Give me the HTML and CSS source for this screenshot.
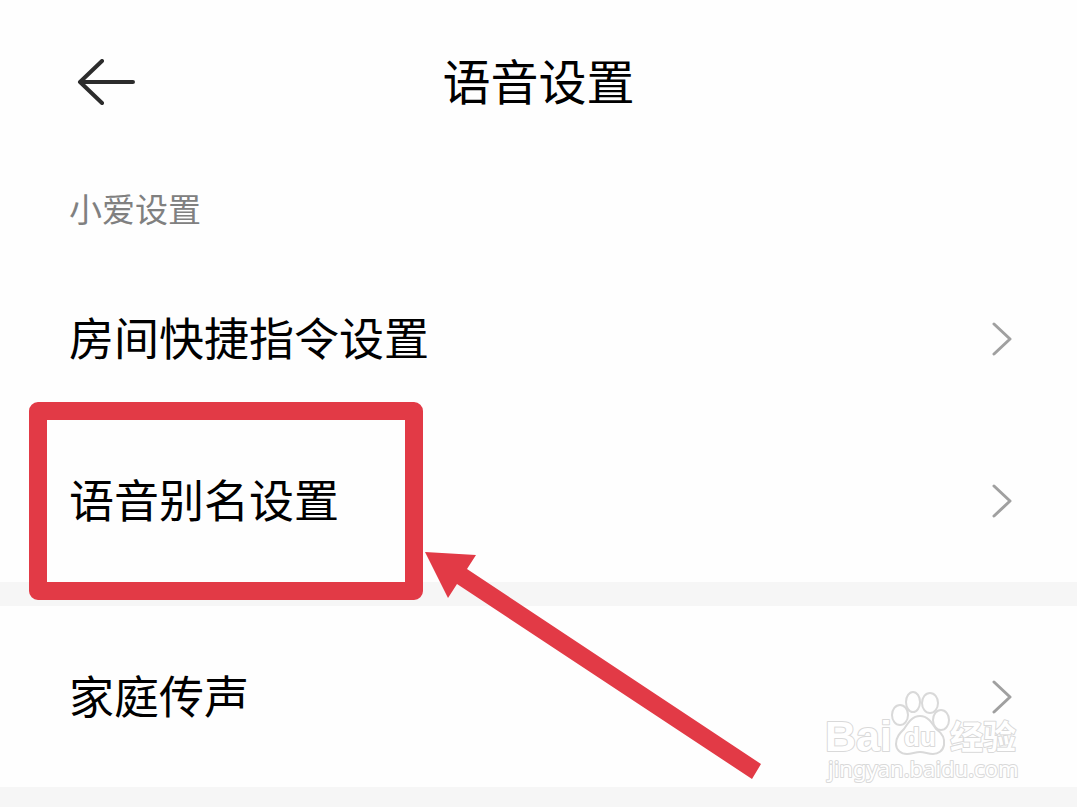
FILE: index.html
```html
<!DOCTYPE html>
<html lang="zh-CN">
<head>
    <meta charset="UTF-8">
    <meta name="viewport" content="width=device-width, initial-scale=1">
    <title>语音设置</title>
    <link rel="stylesheet" href="styles.css">
</head>
<body>
    <header class="header">
        <button class="back" type="button" aria-label="返回">
            <svg width="58" height="46" viewBox="0 0 58 46">
                <path d="M25 2L3 23L25 44M3 23H56"/>
            </svg>
        </button>
        <h1>语音设置</h1>
    </header>

    <main>
        <section class="group">
            <h2>小爱设置</h2>
            <a class="row" href="#room">
                <span>房间快捷指令设置</span>
                <svg class="chevron" width="20" height="34" viewBox="0 0 20 34"><path d="M2 2L18 17L2 32"/></svg>
            </a>
            <div class="marked">
                <a class="row" href="#alias">
                    <span>语音别名设置</span>
                    <svg class="chevron" width="20" height="34" viewBox="0 0 20 34"><path d="M2 2L18 17L2 32"/></svg>
                </a>
                <div class="frame"></div>
                <svg class="arrow" width="338" height="230" viewBox="0 0 338 230">
                    <path d="M1 1L52 4L43 18L337 213L328 228L33 33L24 47Z"/>
                </svg>
            </div>
        </section>

        <section class="group">
            <a class="row tall" href="#broadcast">
                <span>家庭传声</span>
                <svg class="chevron" width="20" height="34" viewBox="0 0 20 34"><path d="M2 2L18 17L2 32"/></svg>
            </a>
            <svg class="watermark" width="200" height="100" viewBox="0 0 200 100">
                <text class="wm-latin" x="1" y="64">Bai</text>
                <ellipse cx="76" cy="28" rx="8" ry="10"/>
                <ellipse cx="89" cy="15" rx="7" ry="10"/>
                <ellipse cx="106" cy="16" rx="8" ry="10"/>
                <ellipse cx="117" cy="33" rx="8" ry="10"/>
                <path d="M96 29C104 29 108 36 112 42C118 46 121 52 120 58C119 64 114 67 109 67C104 67 101 65 96 65C91 65 88 67 83 67C77 67 72 63 72 57C72 50 76 46 80 42C84 36 88 29 96 29Z"/>
                <text class="wm-du" x="80" y="59">du</text>
                <text class="wm-cjk" x="126" y="62">经验</text>
                <text class="wm-url" x="4" y="90">jingyan.baidu.com</text>
            </svg>
        </section>
    </main>
</body>
</html>
```

FILE: styles.css
```css
* { box-sizing: border-box; }
body { margin: 0; min-height: 100vh; background: #f6f6f6; color: #000; font-family: "Noto Sans CJK SC", sans-serif; }
svg { display: block; fill: none; stroke-linecap: round; stroke-linejoin: round; }

.header { display: grid; grid-template-columns: 1fr auto 1fr; align-items: center; height: 164px; padding: 0 77px; background: #fefefe; }
.header h1 { margin: 0; padding-bottom: 6px; font-size: 48px; font-weight: 400; line-height: 72px; }
.back { justify-self: start; padding: 0; border: none; background: none; cursor: pointer; }
.back svg { stroke: #2c2c2c; stroke-width: 4; }

.group { position: relative; margin-bottom: 24px; background: #fefefe; }
.group h2 { margin: 0; padding: 0 69px 6px; color: #808080; font-size: 33px; font-weight: 400; line-height: 88px; }
.row { display: flex; align-items: center; justify-content: space-between; height: 162px; padding: 0 65px 0 69px; color: #000; font-size: 45px; line-height: 68px; text-decoration: none; }
.row span { padding-bottom: 4px; }
.tall { height: 181px; }
.chevron { stroke: #a0a0a0; stroke-width: 3; }

/* highlight drawn over the alias row */
.marked { position: relative; z-index: 1; }
.frame { position: absolute; top: -18px; left: 29px; width: 394px; height: 198px; border: 18px solid #e23a46; border-radius: 9px; pointer-events: none; }
.arrow { position: absolute; top: 131px; left: 424px; fill: #e23a46; pointer-events: none; }

.watermark { position: absolute; right: 53px; bottom: 0; fill: #fff; stroke: #d9d9d9; stroke-width: 2; pointer-events: none; }
.watermark text { paint-order: stroke; }
.wm-latin { font: bold 43px "Liberation Sans", sans-serif; }
.wm-du { font: bold 26px "Liberation Sans", sans-serif; }
.wm-cjk { font: bold 33px "Noto Sans CJK SC", sans-serif; }
.wm-url { font: 22px "Noto Sans", sans-serif; }
```
